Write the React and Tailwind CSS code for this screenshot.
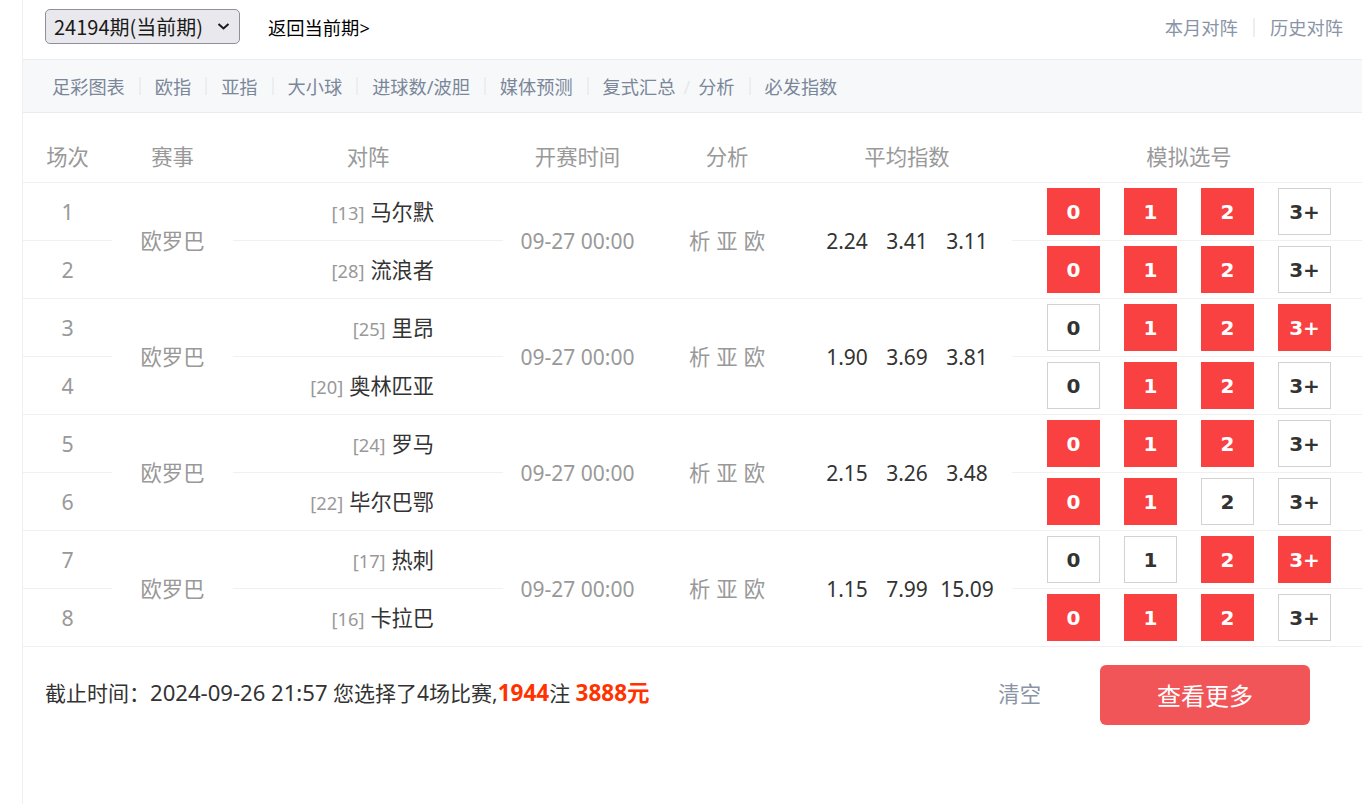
const FONT = "font-['Noto_Sans','Noto_Sans_CJK_SC',sans-serif]";

const NAV = [
  { t: "足彩图表", sep: "bar" },
  { t: "欧指", sep: "bar" },
  { t: "亚指", sep: "bar" },
  { t: "大小球", sep: "bar" },
  { t: "进球数/波胆", sep: "bar" },
  { t: "媒体预测", sep: "bar" },
  { t: "复式汇总", sep: "slash" },
  { t: "分析", sep: "bar" },
  { t: "必发指数" },
];

const GROUPS = [
  {
    odds: ["2.24", "3.41", "3.11"],
    rows: [
      { n: 1, rank: "[13]", team: "马尔默", on: [1, 1, 1, 0] },
      { n: 2, rank: "[28]", team: "流浪者", on: [1, 1, 1, 0] },
    ],
  },
  {
    odds: ["1.90", "3.69", "3.81"],
    rows: [
      { n: 3, rank: "[25]", team: "里昂", on: [0, 1, 1, 1] },
      { n: 4, rank: "[20]", team: "奥林匹亚", on: [0, 1, 1, 0] },
    ],
  },
  {
    odds: ["2.15", "3.26", "3.48"],
    rows: [
      { n: 5, rank: "[24]", team: "罗马", on: [1, 1, 1, 0] },
      { n: 6, rank: "[22]", team: "毕尔巴鄂", on: [1, 1, 0, 0] },
    ],
  },
  {
    odds: ["1.15", "7.99", "15.09"],
    rows: [
      { n: 7, rank: "[17]", team: "热刺", on: [0, 0, 1, 1] },
      { n: 8, rank: "[16]", team: "卡拉巴", on: [1, 1, 1, 0] },
    ],
  },
];

const LABELS = ["0", "1", "2", "3+"];
const LINE = "border-b border-[#f0f0f0]";
const HEAD = "p-0 pt-[20px] font-normal " + LINE;

function Pick({ label, on }) {
  return (
    <button
      className={
        "w-[53px] h-[47px] pt-[1px] flex items-center justify-center text-[20px] font-bold font-['DejaVu_Sans',sans-serif] border " +
        (on
          ? "bg-[#f94141] border-[#f94141] text-white"
          : "bg-white border-[#d2d2d2] text-[#333333]")
      }
    >
      {label}
    </button>
  );
}

function Cells({ row }) {
  return {
    number: <td className={"p-0 pt-[2px] text-center text-[#999999] " + LINE}>{row.n}</td>,
    team: (
      <td className={"p-0 pt-[2px] pr-[69px] text-right text-[21.2px] text-[#333333] " + LINE}>
        <span className="text-[18.3px] text-[#999999] mr-[6px]">{row.rank}</span>
        {row.team}
      </td>
    ),
    picks: (
      <td className={"p-0 pl-[35px] " + LINE}>
        <div className="flex gap-[24px]">
          {LABELS.map((l, i) => (
            <Pick key={l} label={l} on={row.on[i]} />
          ))}
        </div>
      </td>
    ),
  };
}

function Group({ g }) {
  const a = Cells({ row: g.rows[0] });
  const b = Cells({ row: g.rows[1] });
  return (
    <>
      <tr className="h-[58px]">
        {a.number}
        <td rowSpan={2} className={"p-0 pt-[2px] text-center text-[#999999] " + LINE}>
          欧罗巴
        </td>
        {a.team}
        <td rowSpan={2} className={"p-0 pt-[4px] text-center text-[21px] text-[#999999] " + LINE}>
          09-27 00:00
        </td>
        <td rowSpan={2} className={"p-0 pt-[2px] text-[#999999] " + LINE}>
          <div className="flex justify-center gap-[6px]">
            <span>析</span>
            <span>亚</span>
            <span>欧</span>
          </div>
        </td>
        <td rowSpan={2} className={"p-0 pt-[4px] text-[21px] text-[#333333] " + LINE}>
          <div className="flex justify-center">
            {g.odds.map((o) => (
              <span key={o} className="w-[60px] text-center">
                {o}
              </span>
            ))}
          </div>
        </td>
        {a.picks}
      </tr>
      <tr className="h-[58px]">
        {b.number}
        {b.team}
        {b.picks}
      </tr>
    </>
  );
}

export default function App() {
  return (
    <div className={"min-h-[804px] bg-white pl-[22px] text-[#333333] " + FONT}>
      <div className="min-h-[804px] border-l border-[#f0f0f0]">
        <div className="h-[59px] flex items-center justify-between pl-[22px] pr-[19px] pb-[4px]">
          <div className="flex items-center">
            <div className="relative mb-[2px]">
              <select className="block appearance-none w-[195px] h-[35px] pl-[8px] text-[20px] font-['Noto_Sans_CJK_SC',sans-serif] text-[#1a1a1a] bg-[#e9e9ed] border border-[#8f8f9d] rounded-[5px]">
                <option>24194期(当前期)</option>
              </select>
              <svg
                className="absolute left-[172px] top-[14px] w-[13px] h-[7px] pointer-events-none"
                viewBox="0 0 13 7"
                fill="none"
                stroke="#1a1a1a"
                strokeWidth="2"
              >
                <path d="M1.5 1 L6.5 5.5 L11.5 1" />
              </svg>
            </div>
            <a className="ml-[28px] text-[18.3px] text-black">返回当前期&gt;</a>
          </div>
          <div className="flex items-center text-[18.3px] text-[#8a94a6]">
            <span>本月对阵</span>
            <span className="w-[2px] h-[19px] mx-[15px] bg-[#eeeeee]" />
            <span>历史对阵</span>
          </div>
        </div>

        <nav className="h-[54px] flex items-center pl-[29px] bg-[#f7f8fa] border-y border-[#e9ecf0] text-[18.2px] text-[#7a8799]">
          {NAV.map((n) => (
            <div key={n.t} className="flex items-center">
              <span className="pt-[3px]">{n.t}</span>
              {n.sep === "bar" && <span className="w-[2px] h-[18px] mx-[14px] bg-[#eceef1]" />}
              {n.sep === "slash" && <span className="pt-[3px] mx-[8px] text-[#e6e8ec]">/</span>}
            </div>
          ))}
        </nav>

        <table className="w-[1339px] table-fixed border-collapse text-[21.33px]">
          <thead>
            <tr className="h-[69px] text-[#999999]">
              <th className={"w-[89px] " + HEAD}>场次</th>
              <th className={"w-[121px] " + HEAD}>赛事</th>
              <th className={"w-[270px] " + HEAD}>对阵</th>
              <th className={"w-[149px] " + HEAD}>开赛时间</th>
              <th className={"w-[150px] " + HEAD}>分析</th>
              <th className={"w-[210px] " + HEAD}>平均指数</th>
              <th className={"w-[350px] pl-[4px] " + HEAD}>模拟选号</th>
            </tr>
          </thead>
          <tbody>
            {GROUPS.map((g) => (
              <Group key={g.rows[0].n} g={g} />
            ))}
          </tbody>
        </table>

        <div className="flex items-center h-[96px] pl-[22px]">
          <p className="mb-[4px] text-[21px] text-[#333333] whitespace-nowrap">
            截止时间：<span className="text-[22.1px]">2024-09-26 21:57</span> 您选择了4场比赛,
            <b className="text-[22.5px] text-[#ff3300]">1944</b>注{" "}
            <b className="text-[22.5px] text-[#ff3300]">3888元</b>
          </p>
          <a className="ml-auto mb-[2px] text-[21.33px] text-[#8a94a6]">清空</a>
          <button className="ml-[59px] mr-[52px] pt-[2px] w-[210px] h-[60px] rounded-[6px] bg-[#f25558] text-white text-[24px]">
            查看更多
          </button>
        </div>
      </div>
    </div>
  );
}
